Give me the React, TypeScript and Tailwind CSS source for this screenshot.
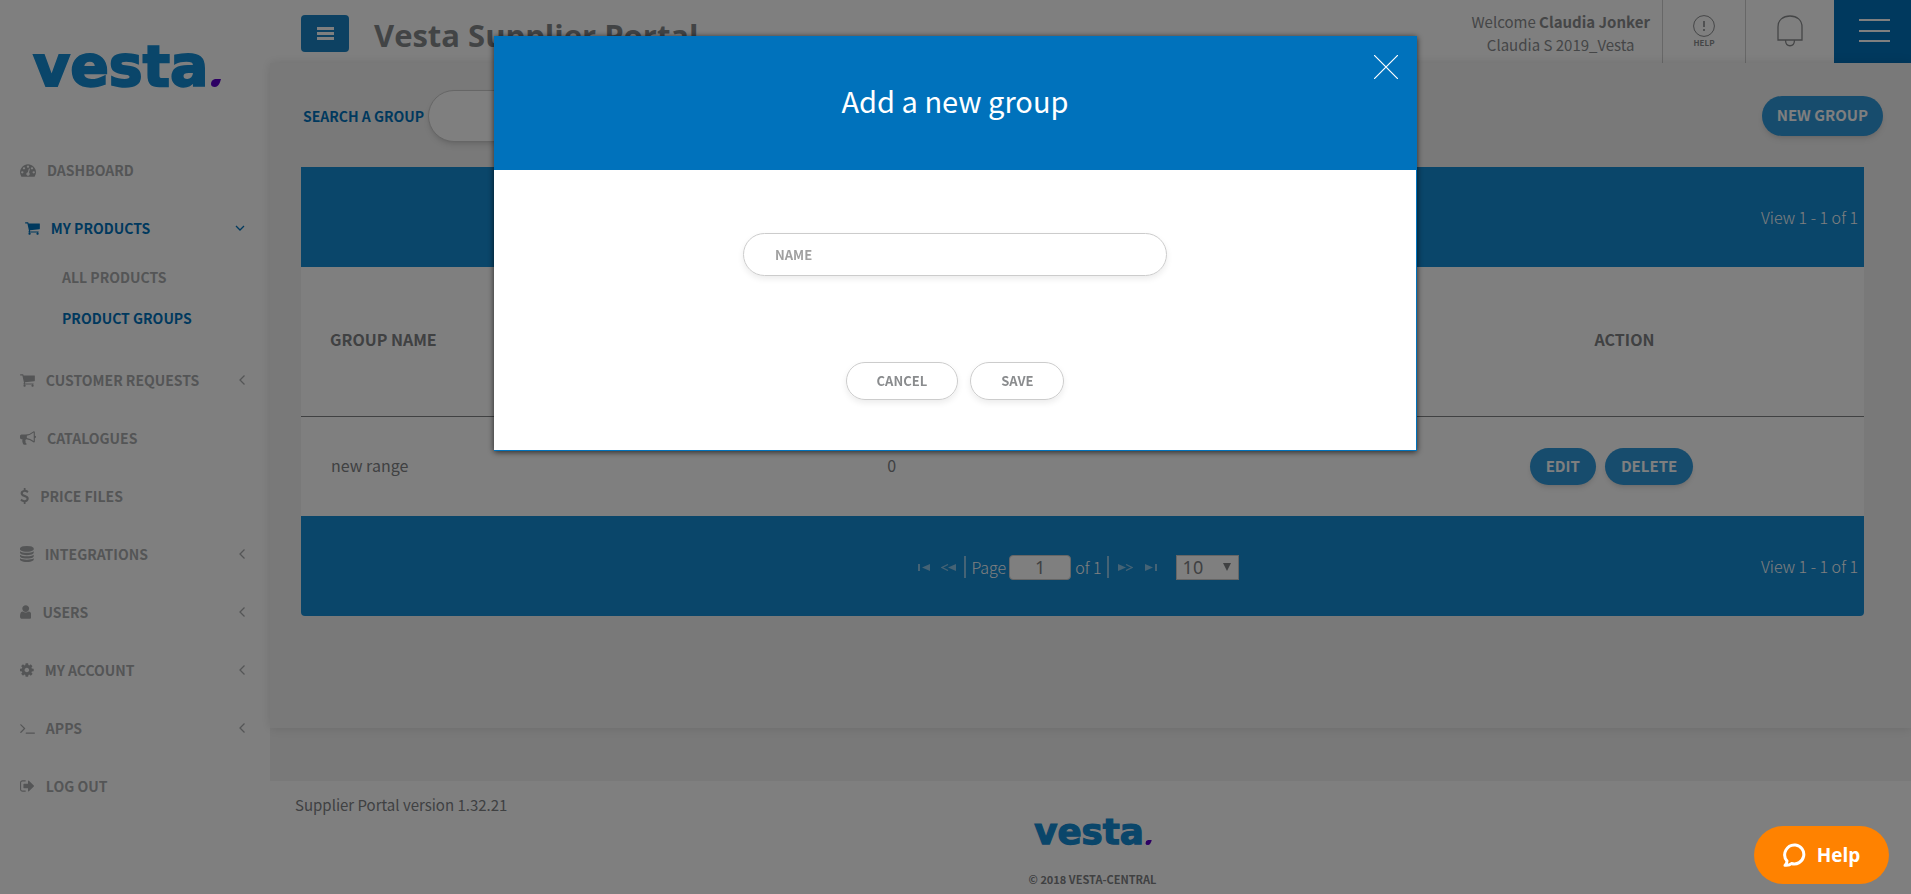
import { useState } from 'react'

type Icon = { path: string; x: number; width: number }

const icons: Record<string, Icon> = {
  dashboard: {
    x: 0,
    width: 1792,
    path: 'M384 1152q0-53-37.5-90.5t-90.5-37.5-90.5 37.5-37.5 90.5 37.5 90.5 90.5 37.5 90.5-37.5 37.5-90.5zm192-448q0-53-37.5-90.5t-90.5-37.5-90.5 37.5-37.5 90.5 37.5 90.5 90.5 37.5 90.5-37.5 37.5-90.5zm428 481l101-382q6-26-7.5-48.5t-38.5-29.5-48 6.5-30 39.5l-101 382q-60 5-107 43.5t-63 98.5q-20 77 20 146t117 89 146-20 89-117q16-60-6-117t-72-91zm660-33q0-53-37.5-90.5t-90.5-37.5-90.5 37.5-37.5 90.5 37.5 90.5 90.5 37.5 90.5-37.5 37.5-90.5zm-640-640q0-53-37.5-90.5t-90.5-37.5-90.5 37.5-37.5 90.5 37.5 90.5 90.5 37.5 90.5-37.5 37.5-90.5zm448 192q0-53-37.5-90.5t-90.5-37.5-90.5 37.5-37.5 90.5 37.5 90.5 90.5 37.5 90.5-37.5 37.5-90.5zm320 448q0 261-141 483-19 29-54 29h-1402q-35 0-54-29-141-221-141-483 0-182 71-348t191-286 286-191 348-71 348 71 286 191 191 286 71 348z',
  },
  cart: {
    x: 64,
    width: 1664,
    path: 'M704 1536q0 52-38 90t-90 38-90-38-38-90 38-90 90-38 90 38 38 90zm896 0q0 52-38 90t-90 38-90-38-38-90 38-90 90-38 90 38 38 90zm128-1088v512q0 24-16.5 42.5t-40.5 21.5l-1044 122q13 60 13 70 0 16-24 64h920q26 0 45 19t19 45-19 45-45 19h-1024q-26 0-45-19t-19-45q0-11 8-31.5t16-36 21.5-40 15.5-29.5l-177-823h-204q-26 0-45-19t-19-45 19-45 45-19h256q16 0 28.5 6.5t19.5 15.5 13 24.5 8 26 5.5 29.5 4.5 26h1201q26 0 45 19t19 45z',
  },
  bullhorn: {
    x: 0,
    width: 1792,
    path: 'M1664 640q53 0 90.5 37.5t37.5 90.5-37.5 90.5-90.5 37.5v384q0 52-38 90t-90 38q-417-347-812-380-58 19-91 66t-31 100.5 40 92.5q-20 33-23 65.5t6 58 33.5 55 48 50 61.5 50.5q-29 58-111.5 83t-168.5 11.5-132-55.5q-7-23-29.5-87.5t-32-94.5-23-89-15-101 3.5-98.5 22-110.5h-122q-66 0-113-47t-47-113v-192q0-66 47-113t113-47h480q435 0 896-384 52 0 90 38t38 90v384zm-128 604v-954q-394 302-768 343v270q377 42 768 341z',
  },
  dollar: {
    x: 384,
    width: 1024,
    path: 'M1362 1185q0 153-99.5 263.5t-258.5 136.5v175q0 14-9 23t-23 9h-135q-13 0-22.5-9.5t-9.5-22.5v-175q-66-9-127.5-31t-101.5-44.5-74-48-46.5-37.5-17.5-18q-17-21-2-41l103-135q7-10 23-12 15-2 24 9l2 2q113 99 243 125 37 8 74 8 81 0 142.5-43t61.5-122q0-28-15-53t-33.5-42-58.5-37.5-66-32-80-32.5q-39-16-61.5-25t-61.5-26.5-62.5-31-56.5-35.5-53.5-42.5-43.5-49-35.5-58-21-66.5-8.5-78q0-138 98-242t255-134v-180q0-13 9.5-22.5t22.5-9.5h135q14 0 23 9t9 23v176q57 6 110.5 23t87 33.5 63.5 37.5 39 29 15 14q17 18 5 38l-81 146q-8 15-23 16-14 3-27-7-3-3-14.5-12t-39-26.5-58.5-32-74.5-26-85.5-11.5q-95 0-155 43t-60 111q0 26 8.5 48t29.5 41.5 39.5 33 56 31 60.5 27 70 27.5q53 20 81 31.5t76 35 75.5 42.5 62 50 53 63.5 31.5 76.5 13 94z',
  },
  database: {
    x: 128,
    width: 1536,
    path: 'M896 768q237 0 443-43t325-127v170q0 69-103 128t-280 93.5-385 34.5-385-34.5-280-93.5-103-128v-170q119 84 325 127t443 43zm0 768q237 0 443-43t325-127v170q0 69-103 128t-280 93.5-385 34.5-385-34.5-280-93.5-103-128v-170q119 84 325 127t443 43zm0-384q237 0 443-43t325-127v170q0 69-103 128t-280 93.5-385 34.5-385-34.5-280-93.5-103-128v-170q119 84 325 127t443 43zm0-1152q208 0 385 34.5t280 93.5 103 128v128q0 69-103 128t-280 93.5-385 34.5-385-34.5-280-93.5-103-128v-128q0-69 103-128t280-93.5 385-34.5z',
  },
  user: {
    x: 256,
    width: 1280,
    path: 'M1536 1399q0 109-62.5 187t-150.5 78h-854q-88 0-150.5-78t-62.5-187q0-85 8.5-160.5t31.5-152 58.5-131 94-89 134.5-34.5q131 128 313 128t313-128q76 0 134.5 34.5t94 89 58.5 131 31.5 152 8.5 160.5zm-256-887q0 159-112.5 271.5t-271.5 112.5-271.5-112.5-112.5-271.5 112.5-271.5 271.5-112.5 271.5 112.5 112.5 271.5z',
  },
  cog: {
    x: 128,
    width: 1536,
    path: 'M1152 896q0-106-75-181t-181-75-181 75-75 181 75 181 181 75 181-75 75-181zm512-109v222q0 12-8 23t-20 13l-185 28q-19 54-39 91 35 50 107 138 10 12 10 25t-9 23q-27 37-99 108t-94 71q-12 0-26-9l-138-108q-44 23-91 38-16 136-29 186-7 28-36 28h-222q-14 0-24.5-8.5t-11.5-21.5l-28-184q-49-16-90-37l-141 107q-10 9-25 9-14 0-25-11-126-114-165-168-7-10-7-23 0-12 8-23 15-21 51-66.5t54-70.5q-27-50-41-99l-183-27q-13-2-21-12.5t-8-23.5v-222q0-12 8-23t19-13l186-28q14-46 39-92-40-57-107-138-10-12-10-24 0-10 9-23 26-36 98.5-107.5t94.5-71.5q13 0 26 10l138 107q44-23 91-38 16-136 29-186 7-28 36-28h222q14 0 24.5 8.5t11.5 21.5l28 184q49 16 90 37l142-107q9-9 24-9 13 0 25 10 129 119 165 170 7 8 7 22 0 12-8 23-15 21-51 66.5t-54 70.5q26 50 41 98l183 28q13 2 21 12.5t8 23.5z',
  },
  terminal: {
    x: 64,
    width: 1664,
    path: 'M649 983l-466 466q-10 10-23 10t-23-10l-50-50q-10-10-10-23t10-23l393-393-393-393q-10-10-10-23t10-23l50-50q10-10 23-10t23 10l466 466q10 10 10 23t-10 23zm1079 457v64q0 14-9 23t-23 9h-960q-14 0-23-9t-9-23v-64q0-14 9-23t23-9h960q14 0 23 9t9 23z',
  },
  signOut: {
    x: 64,
    width: 1664,
    path: 'M704 1440q0 4 1 20t.5 26.5-3 23.5-10 19.5-20.5 6.5h-320q-119 0-203.5-84.5t-84.5-203.5v-704q0-119 84.5-203.5t203.5-84.5h320q13 0 22.5 9.5t9.5 22.5q0 4 1 20t.5 26.5-3 23.5-10 19.5-20.5 6.5h-320q-66 0-113 47t-47 113v704q0 66 47 113t113 47h312l11.5 1 11.5 3 8 5.5 7 9 2 13.5zm928-544q0 26-19 45l-544 544q-19 19-45 19t-45-19-19-45v-288h-448q-26 0-45-19t-19-45v-384q0-26 19-45t45-19h448v-288q0-26 19-45t45-19 45 19l544 544q19 19 19 45z',
  },
}

function MenuIcon({ name }: { name: string }) {
  const icon = icons[name]
  return (
    <svg className="h-4 w-auto shrink-0" fill="currentColor" viewBox={`${icon.x} 0 ${icon.width} 1792`}>
      <path d={icon.path} />
    </svg>
  )
}

function Logo({ small = false }: { small?: boolean }) {
  return (
    <svg className={small ? 'h-[45px] w-[120px]' : 'h-[72px] w-[192px]'} viewBox="0 -12 192 72" role="img" aria-label="vesta">
      <text
        x="2"
        y="43"
        fontFamily="'DejaVu Sans', sans-serif"
        fontWeight="700"
        fontSize="57"
        fill="#148cd4"
        stroke="#148cd4"
        strokeWidth="2"
      >
        vesta
      </text>
      <path d="M190 36h-6q-4 1-4 5 0 3 4 3 4 0 6-8z" fill="#5a00c8" />
    </svg>
  )
}

const menu = [
  { label: 'DASHBOARD', icon: 'dashboard' },
  {
    label: 'MY PRODUCTS',
    icon: 'cart',
    active: true,
    children: [{ label: 'ALL PRODUCTS' }, { label: 'PRODUCT GROUPS', active: true }],
  },
  { label: 'CUSTOMER REQUESTS', icon: 'cart', more: true },
  { label: 'CATALOGUES', icon: 'bullhorn' },
  { label: 'PRICE FILES', icon: 'dollar' },
  { label: 'INTEGRATIONS', icon: 'database', more: true },
  { label: 'USERS', icon: 'user', more: true },
  { label: 'MY ACCOUNT', icon: 'cog', more: true },
  { label: 'APPS', icon: 'terminal', more: true },
  { label: 'LOG OUT', icon: 'signOut' },
]

function Sidebar() {
  return (
    <aside className="w-[270px] shrink-0 bg-white">
      <div className="pl-[31px] pt-[31px] pb-[38px]">
        <Logo />
      </div>
      <nav className="text-[14px] font-bold text-[#a9abad]">
        <ul>
          {menu.map((item) => (
            <li key={item.label}>
              <a
                href="#"
                className={`flex h-[58px] items-center pr-6 ${item.active ? 'pl-[25px] text-[#0072bc]' : 'pl-5'}`}
              >
                <MenuIcon name={item.icon} />
                <span className="ml-[11px] flex-1">{item.label}</span>
                {item.more && (
                  <svg className="h-3 w-2" viewBox="0 0 8 12" fill="none" stroke="currentColor" strokeWidth="1.3">
                    <path d="M6.500 1.500L2 6l4.500 4.500" />
                  </svg>
                )}
                {item.children && (
                  <svg className="h-2 w-3" viewBox="0 0 12 8" fill="none" stroke="currentColor" strokeWidth="1.3">
                    <path d="M2 2l4 4 4-4" />
                  </svg>
                )}
              </a>
              {item.children && (
                <ul className="pb-3">
                  {item.children.map((child) => (
                    <li key={child.label}>
                      <a
                        href="#"
                        className={`flex h-[41px] items-center pl-[62px] ${child.active ? 'text-[#0072bc]' : ''}`}
                      >
                        {child.label}
                      </a>
                    </li>
                  ))}
                </ul>
              )}
            </li>
          ))}
        </ul>
      </nav>
    </aside>
  )
}

function Header() {
  return (
    <header className="flex h-[63px] items-stretch bg-white">
      <div className="flex flex-1 items-start pl-[31px]">
        <button
          aria-label="Toggle menu"
          className="mt-[15px] flex h-[37px] w-12 items-center justify-center rounded bg-[#1a83c4] text-white"
        >
          <svg className="h-[13px] w-[17px]" viewBox="0 0 17 13" fill="currentColor">
            <path d="M0 0h17v3H0zM0 5h17v3H0zM0 10h17v3H0z" />
          </svg>
        </button>
        <h1 className="ml-[25px] mt-[15px] font-['Open_Sans',sans-serif] text-[31px] leading-10 font-bold text-[#85888b]">
          Vesta Supplier Portal
        </h1>
      </div>
      <div className="px-3 pt-[10px] text-center text-[15px] leading-[23px] text-[#8a8c8e]">
        <p>
          Welcome <strong className="font-bold">Claudia Jonker</strong>
        </p>
        <p>Claudia S 2019_Vesta</p>
      </div>
      <a
        href="#"
        className="flex w-[83px] flex-col items-center border-l border-[#cfcfcf] pt-[15px] text-[8px] leading-3 font-bold text-[#8a8c8e]"
      >
        <svg className="h-[22px] w-[22px]" viewBox="0 0 22 22" fill="none" stroke="currentColor">
          <circle cx="11" cy="11" r="10.4" />
          <path d="M11 6v6M11 14v2" strokeWidth="1.6" />
        </svg>
        HELP
      </a>
      <button
        aria-label="Notifications"
        className="flex w-[89px] justify-center border-l border-[#cfcfcf] pt-[15px] text-[#8a8c8e]"
      >
        <svg className="h-8 w-[26px]" viewBox="0 0 26 32" fill="none" stroke="currentColor" strokeWidth="1.3">
          <path d="M1 25V12C1 5 6 1 13 1s12 4 12 11v13zM8.500 25.500c.5 7 8.500 7 9 0" />
        </svg>
      </button>
      <button aria-label="Open navigation" className="flex w-[77px] justify-center bg-[#0072bc] pt-[19px] pl-1">
        <svg className="h-6 w-[31px]" viewBox="0 0 31 24" fill="#fff">
          <path d="M0 0h31v2H0zM0 11h31v2H0zM0 21h31v2H0z" />
        </svg>
      </button>
    </header>
  )
}

const rows = [{ name: 'new range', products: 0 }]

function GroupTable() {
  return (
    <section className="mr-[19px] overflow-hidden rounded-b bg-white">
      <div className="flex h-[100px] items-center justify-end bg-[#148cd4] pr-[6px] text-[16px] font-light text-white">
        View 1 - 1 of 1
      </div>
      <table className="w-full table-fixed text-[16px] text-[#808285]">
        <thead>
          <tr className="h-[149px] border-b border-[#808285]">
            <th className="w-[37.5%] pb-1 pl-[29px] text-left font-bold">GROUP NAME</th>
            <th></th>
            <th className="w-[481px] pb-1 pl-[2px] font-bold">ACTION</th>
          </tr>
        </thead>
        <tbody>
          {rows.map((row) => (
            <tr key={row.name} className="h-[100px]">
              <td className="pb-[3px] pl-[30px]">{row.name}</td>
              <td className="pb-[3px]">{row.products}</td>
              <td>
                <div className="flex justify-center gap-[9px] pr-6">
                  <button className="h-[37px] rounded-full bg-[#2e98da] px-4 text-[15px] font-bold text-white shadow-md">
                    EDIT
                  </button>
                  <button className="h-[37px] rounded-full bg-[#2e98da] px-4 text-[15px] font-bold text-white shadow-md">
                    DELETE
                  </button>
                </div>
              </td>
            </tr>
          ))}
        </tbody>
      </table>
      <Pager />
    </section>
  )
}

function Pager() {
  return (
    <div className="grid h-[100px] grid-cols-[1fr_auto_1fr] items-center bg-[#148cd4] text-[16px] font-light text-white">
      <span></span>
      <div className="flex items-center pt-[2px] pr-2">
        <button aria-label="First page" className="mr-[11px] text-white/50">
          <svg className="h-[7px] w-3" viewBox="0 0 12 7" fill="currentColor">
            <path d="M0 0h2v7H0zM12 0v7L4 3.500z" />
          </svg>
        </button>
        <button aria-label="Previous page" className="mr-2 text-white/50">
          <svg className="h-[7px] w-[15px]" viewBox="0 0 15 7" fill="currentColor">
            <path d="M15 0v7L7 3.500z" />
            <path d="M7 .5L1 3.500l6 3" fill="none" stroke="currentColor" strokeWidth="1.300" />
          </svg>
        </button>
        <span className="mr-[5px] h-[22px] w-[2px] bg-white/50"></span>
        <label htmlFor="page">Page</label>
        <input
          id="page"
          defaultValue="1"
          className="ml-[3px] mr-1 h-[25px] w-[62px] rounded border border-[#ccc] bg-white text-center font-['Noto_Sans',sans-serif] text-[18px] font-normal text-[#808285]"
        />
        <span>of 1</span>
        <span className="ml-[5px] mr-[9px] h-[22px] w-[2px] bg-white/50"></span>
        <button aria-label="Next page" className="mr-3 text-white/50">
          <svg className="h-[7px] w-[15px]" viewBox="0 0 15 7" fill="currentColor">
            <path d="M0 0v7l8-3.500z" />
            <path d="M8 .5l6 3-6 3" fill="none" stroke="currentColor" strokeWidth="1.300" />
          </svg>
        </button>
        <button aria-label="Last page" className="mr-[19px] text-white/50">
          <svg className="h-[7px] w-3" viewBox="0 0 12 7" fill="currentColor">
            <path d="M10 0h2v7h-2zM0 0v7l8-3.500z" />
          </svg>
        </button>
        <div className="relative">
          <select
            aria-label="Rows per page"
            className="block h-[25px] w-[63px] appearance-none border border-[#ccc] bg-white pl-[6px] font-['Noto_Sans',sans-serif] text-[18px] leading-[23px] font-normal text-[#808285]"
          >
            <option>10</option>
            <option>20</option>
            <option>30</option>
          </select>
          <svg className="pointer-events-none absolute top-2 right-2 h-2 w-2 text-[#808285]" viewBox="0 0 8 8" fill="currentColor">
            <path d="M0 0h8L4 8z" />
          </svg>
        </div>
      </div>
      <span className="pr-[6px] text-right">View 1 - 1 of 1</span>
    </div>
  )
}

function AddGroupModal({ onClose }: { onClose: () => void }) {
  return (
    <div className="fixed inset-0 z-10 flex items-start justify-center bg-black/50 pt-9">
      <div
        role="dialog"
        aria-labelledby="modal-title"
        className="relative w-[923px] border-r border-b border-[#0072bc] bg-white shadow-[0_1px_6px_rgba(0,0,0,0.7)]"
      >
        <div className="flex h-[134px] items-center justify-center bg-[#0072bc] pb-1">
          <h2 id="modal-title" className="text-[29px] text-white">
            Add a new group
          </h2>
        </div>
        <button aria-label="Close" onClick={onClose} className="absolute top-[19px] right-[18px]">
          <svg className="h-6 w-6" viewBox="0 0 24 24" stroke="#fff" strokeWidth="1.200">
            <path d="M0 0l24 24M24 0L0 24" />
          </svg>
        </button>
        <form className="flex flex-col items-center pt-[63px] pb-[50px]" onSubmit={(e) => e.preventDefault()}>
          <input
            aria-label="Name"
            placeholder="NAME"
            className="h-[43px] w-[424px] rounded-full border border-[#ccc] px-[31px] text-[13px] font-bold text-[#808285] shadow-[0_3px_6px_rgba(0,0,0,0.08)] placeholder:text-[#a0a0a0]"
          />
          <div className="mt-[86px] flex gap-3 text-[13px] font-bold text-[#8a8c8e]">
            <button
              type="button"
              onClick={onClose}
              className="h-[38px] rounded-full border border-[#ccc] px-[30px] shadow-[0_3px_6px_rgba(0,0,0,0.08)]"
            >
              CANCEL
            </button>
            <button
              type="submit"
              className="h-[38px] rounded-full border border-[#ccc] px-[30px] shadow-[0_3px_6px_rgba(0,0,0,0.08)]"
            >
              SAVE
            </button>
          </div>
        </form>
      </div>
    </div>
  )
}

export default function App() {
  const [open, setOpen] = useState(true)

  return (
    <div className="flex min-h-screen bg-white font-['Noto_Sans_CJK_SC',sans-serif]">
      <Sidebar />
      <div className="flex min-w-0 flex-1 flex-col">
        <Header />
        <main className="bg-[#f2f2f2] pb-[53px]">
          {/* Search and table */}
          <div className="pt-[27px] pr-7 pb-28 pl-[31px] shadow-[0_0_10px_rgba(0,0,0,0.12)]">
            <div className="mb-[25px] flex h-[52px] items-center">
              <label htmlFor="search" className="ml-[2px] text-[14px] font-bold text-[#0072bc]">
                SEARCH A GROUP
              </label>
              <input
                id="search"
                className="ml-1 h-[52px] w-[300px] rounded-full border border-[#ccc] bg-white px-6 shadow-md"
              />
              <button className="ml-auto h-10 rounded-full bg-[#2e98da] px-[15px] pb-[2px] text-[15px] font-bold text-white shadow-md">
                NEW GROUP
              </button>
            </div>
            <GroupTable />
          </div>
        </main>
        <footer className="flex-1 px-[25px] pt-3 text-[#808285]">
          <p className="text-[15px] leading-6">Supplier Portal version 1.32.21</p>
          <div className="-mt-[7px] flex flex-col items-center pl-1">
            <Logo small />
            <p className="mt-[14px] text-[11px] leading-5 font-bold">© 2018 VESTA-CENTRAL</p>
          </div>
        </footer>
      </div>

      {open && <AddGroupModal onClose={() => setOpen(false)} />}

      {/* Chat launcher stays above the overlay */}
      <button className="fixed right-[22px] bottom-[10px] z-20 flex h-[58px] w-[135px] items-center justify-center gap-[10px] rounded-full bg-[#ff8200] font-['Open_Sans',sans-serif] text-[19px] font-bold text-white">
        <svg className="h-6 w-6" viewBox="0 0 24 24" fill="none" stroke="#fff" strokeWidth="3" strokeLinejoin="round">
          <path d="M12.500 2a9.500 9.500 0 1 1-4 18.500C7 22 4 22.500 2 22.300c1.500-1.300 2-2.800 2-4.300A9.800 9.800 0 0 1 12.500 2z" />
        </svg>
        Help
      </button>
    </div>
  )
}
